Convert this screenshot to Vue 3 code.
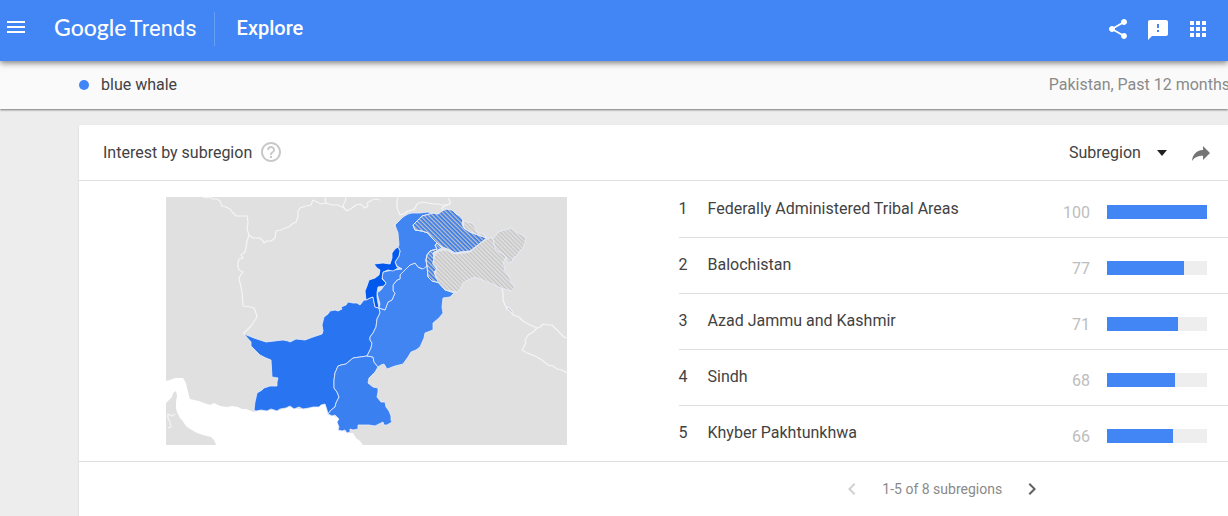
<template>
  <div class="page">
    <header class="topbar">
      <button class="icon-btn menu" aria-label="Main menu">
        <svg viewBox="0 0 24 24"><path d="M3 18h18v-2H3v2zm0-5h18v-2H3v2zm0-7v2h18V6H3z" /></svg>
      </button>
      <a class="logo" href="#"><span class="logo-name">Google</span><span class="logo-product">Trends</span></a>
      <h1 class="section-name">Explore</h1>
      <div class="actions">
        <button class="icon-btn" aria-label="Share">
          <svg viewBox="0 0 24 24"><path d="M18 16.08c-.76 0-1.44.3-1.96.77L8.91 12.7c.05-.23.09-.46.09-.7s-.04-.47-.09-.7l7.05-4.11c.54.5 1.25.81 2.04.81 1.66 0 3-1.34 3-3s-1.34-3-3-3-3 1.34-3 3c0 .24.04.47.09.7L8.04 9.81C7.5 9.31 6.79 9 6 9c-1.66 0-3 1.34-3 3s1.34 3 3 3c.79 0 1.5-.31 2.04-.81l7.12 4.16c-.05.21-.08.43-.08.65 0 1.61 1.31 2.92 2.92 2.92s2.92-1.31 2.92-2.92-1.31-2.92-2.92-2.92z" /></svg>
        </button>
        <button class="icon-btn" aria-label="Send feedback">
          <svg viewBox="0 0 24 24"><path d="M20 3H4c-1.1 0-2 .9-2 2v18l4-4h14c1.1 0 2-.9 2-2V5c0-1.1-.9-2-2-2zm-7 12h-2v-2h2v2zm0-4h-2V7h2v4z" /></svg>
        </button>
        <button class="icon-btn" aria-label="Google apps">
          <svg viewBox="0 0 24 24"><path d="M4 8h4V4H4v4zm6 12h4v-4h-4v4zm-6 0h4v-4H4v4zm0-6h4v-4H4v4zm6 0h4v-4h-4v4zm6-10v4h4V4h-4zm-6 4h4V4h-4v4zm6 6h4v-4h-4v4zm0 6h4v-4h-4v4z" /></svg>
        </button>
      </div>
    </header>

    <div class="termbar">
      <span class="dot"></span>
      <span class="term">blue whale</span>
      <span class="filters">Pakistan, Past 12 months</span>
    </div>

    <main class="card">
      <div class="card-head">
        <h2>Interest by subregion</h2>
        <button class="icon-btn help" aria-label="Help">
          <svg viewBox="0 0 24 24"><path d="M11 18h2v-2h-2v2zm1-16C6.48 2 2 6.48 2 12s4.48 10 10 10 10-4.48 10-10S17.52 2 12 2zm0 18c-4.41 0-8-3.59-8-8s3.59-8 8-8 8 3.59 8 8-3.59 8-8 8zm0-14c-2.21 0-4 1.79-4 4h2c0-1.1.9-2 2-2s2 .9 2 2c0 2-3 1.75-3 5h2c0-2.25 3-2.5 3-5 0-2.21-1.79-4-4-4z" /></svg>
        </button>
        <div class="resolution">
          <select v-model="resolution" aria-label="Resolution">
            <option>Subregion</option>
          </select>
          <svg viewBox="0 0 10 6"><path d="M0 0h10L5 6z" /></svg>
        </div>
        <button class="icon-btn forward" aria-label="Share chart">
          <svg viewBox="0 0 24 24"><path d="M14 5v4C7 9.5 3.5 14 3 20c2.5-3.8 6-5.3 11-5.300V19l7-7z" /></svg>
        </button>
      </div>

      <div class="card-body">
        <div class="map-col">
          <svg class="map" viewBox="166 197 401 248" role="img" aria-label="Map of interest by subregion">
            <defs>
              <pattern id="hatch" width="3" height="3" patternUnits="userSpaceOnUse" patternTransform="rotate(-45)">
                <rect width="1.3" height="3" fill="#c4c4c4" />
              </pattern>
            </defs>
            <rect x="166" y="197" width="401" height="248" fill="#e0e0e0" />
            <path class="sea" :d="sea" />
            <path v-for="(d, i) in borders" :key="'b' + i" class="border" :d="d" />
            <path v-for="r in regions" :key="r.name" class="region" :fill="r.color" :d="r.d" />
            <path v-for="(d, i) in disputed" :key="'d' + i" class="region" fill="url(#hatch)" :d="d" />
          </svg>
        </div>

        <table class="list">
          <tbody>
            <tr v-for="(row, i) in rows" :key="row.name">
              <td class="rank">{{ i + 1 }}</td>
              <td class="name">{{ row.name }}</td>
              <td class="value">{{ row.value }}</td>
              <td class="bar-cell">
                <div class="bar"><div class="bar-fill" :style="{ width: row.value + '%' }"></div></div>
              </td>
            </tr>
          </tbody>
        </table>
      </div>

      <div class="card-foot">
        <nav class="pager">
          <button class="icon-btn prev" aria-label="Previous" disabled>
            <svg viewBox="0 0 24 24"><path d="M15.41 7.41L14 6l-6 6 6 6 1.41-1.41L10.83 12z" /></svg>
          </button>
          <span>1-5 of 8 subregions</span>
          <button class="icon-btn next" aria-label="Next">
            <svg viewBox="0 0 24 24"><path d="M10 6L8.59 7.41 13.17 12l-4.58 4.59L10 18l6-6z" /></svg>
          </button>
        </nav>
      </div>
    </main>
  </div>
</template>

<script setup>
import { ref } from 'vue'

const resolution = ref('Subregion')

const rows = [
  { name: 'Federally Administered Tribal Areas', value: 100 },
  { name: 'Balochistan', value: 77 },
  { name: 'Azad Jammu and Kashmir', value: 71 },
  { name: 'Sindh', value: 68 },
  { name: 'Khyber Pakhtunkhwa', value: 66 },
]

// Gulf of Oman and the Arabian Sea
const sea = 'M166 381L170 380 175 378 183 378 186 383 188 392 190 399 194 400 199 401 204 403 210 405 214 403 216 404 220 406 227 407 232 406 238 407 242 409 246 409 254 412 262 410 280 410 288 407 300 409 319 405 326 404 328 413 338 418 338 427 343 431 350 433 353 433 356 438 360 441 363 445 216 445 214 440 211 437 203 435 197 433 190 429 186 426 182 420 180 418 177 412 176 408 176 402 177 396 176 391 173 393 172 397 169 400 166 403z'

const borders = [
  'M203 197L206 198 210 197 213 199 217 199 220 201 222 206 226 207 230 209 233 213 236 216 247 216 248 222 247 229 249 235 247 241 246 248 245 252 241 255 243 258 239 259 238 263 238 267 239 270 243 272 240 276 239 279 241 287 242 292 243 306 251 307 254 308 256 313 257 317 255 320 251 326 247 330 243 334',
  'M249 235L253 238 260 238 263 241 264 243 267 241 271 241 275 238 276 231 281 230 285 228 289 227 292 224 296 222 298 217 298 211 300 208 306 206 311 205 313 200 317 202 321 204 326 203 332 205 338 205 342 207 344 208 347 211 352 208 356 205 360 204 363 206 365 208 368 206 367 203 372 200 376 199 380 200',
  'M326 197L325 200 326 203M346 197L345 202 343 205 344 208',
  'M398 197L397 202 397 208 400 215 404 214 408 211 413 210 415 208 417 204 422 202 428 203 433 204 438 204 442 205 446 205 450 204 450 201 448 198',
  'M450 204L445 206 442 208 442 210M395 225L394 226',
  'M502 288L503 293 503 300 505 305 507 309 510 311 513 315 519 317 523 321 530 325 537 328 540 327 543 324 548 325 552 325 556 329 560 333 564 337 567 338',
  'M537 328L533 332 528 335 525 340 526 343 522 350 527 353 530 354 535 356 542 360 548 365 553 366 557 369 562 370 567 373',
  'M507 310L508 307 512 311 513 315M168 428L171 427 170 422 168 418 168 414 172 416 175 414',
]

const regions = [
  {
    name: 'balochistan',
    color: '#2974f0',
    d: 'M244 334L254 338 266 342 283 340 288 341 290 342 296 339 305 340 313 337 322 334 323 331 322 325 324 317 328 314 330 311 335 310 338 311 342 309 341 307 346 305 348 302 353 303 357 303 360 305 364 300 366 300 370 298 373 297 375 307 379 308 380 313 377 319 376 327 373 333 370 337 370 340 372 343 371 348 367 356 360 357 353 358 346 364 341 365 338 366 335 373 334 380 334 388 337 392 339 397 336 403 335 407 331 410 328 414 327 410 325 404 321 405 319 407 313 407 309 408 303 409 299 407 294 409 290 406 286 408 280 409 277 411 271 409 267 411 261 410 256 411 254 410 255 402 257 393 262 390 264 388 270 386 277 386 277 382 278 378 272 377 271 360 266 358 260 355 255 350 251 346 251 342z',
  },
  {
    name: 'sindh',
    color: '#3b80f0',
    d: 'M367 356L373 357 374 362 378 367 375 372 369 378 368 383 373 387 378 388 378 392 377 397 381 402 385 402 386 407 389 411 391 416 391 420 392 422 387 425 384 425 383 422 379 424 375 426 369 425 358 425 358 429 353 430 350 429 350 432 347 433 345 430 342 431 338 430 339 427 337 422 339 419 335 415 332 416 328 414 331 410 335 407 336 403 339 397 337 392 334 388 334 380 335 373 338 366 341 365 346 364 353 358 360 357z',
  },
  {
    name: 'punjab',
    color: '#4185f3',
    d: 'M379 308L385 310 388 302 392 300 395 293 393 291 393 285 397 280 400 279 400 275 405 270 410 265 415 263 418 267 422 269 425 265 428 268 428 277 432 281 438 282 445 290 454 293 450 297 443 298 442 307 443 313 439 318 433 323 433 330 425 333 424 338 420 347 416 350 411 352 408 357 403 364 395 366 387 369 384 364 381 365 378 367 374 362 373 357 367 356 371 348 372 343 370 340 370 337 373 333 376 327 377 319 380 313z',
  },
  {
    name: 'khyber-pakhtunkhwa',
    color: '#4185f3',
    d: 'M395 225L399 221 403 217 408 214 412 213 420 213 428 212 433 214 422 216 418 220 413 225 415 230 422 231 428 233 432 238 437 243 435 245 437 249 430 251 427 255 426 260 427 266 423 269 418 267 415 263 410 265 405 270 400 275 400 279 397 280 393 285 393 291 395 293 392 300 388 302 385 310 379 308 380 304 377 293 381 290 386 283 382 278 383 272 393 270 402 269 397 266 395 262 399 256 400 251 398 247 399 245 398 233z',
  },
  {
    name: 'tribal-areas',
    color: '#0059ec',
    d: 'M398 247L395 249 392 253 392 258 390 264 383 263 374 264 377 268 380 270 379 275 375 278 369 280 367 286 365 291 366 300 370 298 373 297 375 307 379 308 378 303 377 297 377 293 378 287 384 286 386 283 382 279 383 272 388 270 393 271 398 268 402 269 397 267 395 262 399 256 400 251z',
  },
  {
    name: 'gilgit-baltistan',
    color: '#3279f0',
    d: 'M413 225L418 220 422 216 433 213 438 214 442 211 446 209 452 210 456 214 460 216 463 220 462 224 464 228 470 232 478 235 487 238 478 245 470 251 461 252 455 253 450 250 442 247 437 243 432 238 428 233 422 231 415 230z',
  },
  {
    name: 'azad-kashmir',
    color: '#3279f0',
    d: 'M437 243L435 245 437 249 430 251 427 255 426 260 427 266 428 277 432 281 440 283 436 277 434 272 437 269 433 264 434 258 433 253 438 250 442 248z',
  },
]

// claimed areas, drawn hatched over whatever lies below
const disputed = [
  regions[5].d,
  regions[6].d,
  'M438 251L446 250 455 254 470 252 478 245 487 239 493 237 494 245 498 251 503 254 506 257 503 263 505 267 504 270 509 276 511 282 515 287 512 291 508 290 498 287 493 284 489 283 485 281 480 279 475 277 468 280 463 283 461 288 457 292 451 291 445 290 438 282 436 277 435 273 437 267 433 264 434 257z',
  'M493 238L497 234 498 232 504 230 512 228 516 232 520 234 526 237 525 243 523 248 519 252 517 256 513 258 512 262 508 263 506 257 503 254 496 250 494 244z',
  'M463 221L467 222 472 223 475 227 477 232 485 235 487 238 478 235 470 232 464 228z',
  'M507 309L508 307 512 311 513 315z',
]
</script>

<style>
body {
  margin: 0;
  background: #ededed;
}
</style>

<style scoped>
.page {
  font-family: Roboto, "Liberation Sans", sans-serif;
  font-size: 16px;
  line-height: 24px;
  color: #424242;
  min-height: 100vh;
  display: flex;
  flex-direction: column;
  overflow: hidden;
}
h1,
h2 {
  margin: 0;
  font-size: 16px;
  font-weight: 400;
}
.icon-btn {
  display: block;
  width: 24px;
  height: 24px;
  padding: 0;
  border: 0;
  background: none;
  color: inherit;
  cursor: pointer;
}
.icon-btn svg {
  display: block;
  width: 24px;
  height: 24px;
  fill: currentColor;
}

/* Blue header */
.topbar {
  position: relative;
  z-index: 2;
  display: flex;
  align-items: center;
  height: 57px;
  padding: 0 18px 4px 4px;
  background: #4285f4;
  color: #fff;
  box-shadow: 0 2px 6px rgba(0, 0, 0, 0.5);
}
.menu {
  margin-bottom: 4px;
}
.logo {
  display: flex;
  align-items: baseline;
  gap: 3px;
  margin-left: 26px;
  padding-right: 17px;
  padding-bottom: 2px;
  border-right: 1px solid #689df6;
  line-height: 30px;
  color: #fff;
  text-decoration: none;
}
.logo-name {
  font-family: Lato, sans-serif;
  font-size: 23px;
  font-weight: 500;
}
.logo-product {
  font-size: 22px;
}
.section-name {
  margin-left: 22px;
  padding-bottom: 2px;
  font-size: 20px;
  font-weight: 500;
}
.actions {
  display: flex;
  gap: 16px;
  margin-left: auto;
  padding-top: 1px;
}

/* Search term strip */
.termbar {
  position: relative;
  z-index: 1;
  display: flex;
  align-items: center;
  height: 48px;
  padding-left: 79px;
  background: #fafafa;
  box-shadow: 0 1px 2px rgba(0, 0, 0, 0.5);
  white-space: nowrap;
}
.dot {
  width: 10px;
  height: 10px;
  margin-right: 12px;
  border-radius: 50%;
  background: #4285f4;
}
.filters {
  margin-left: auto;
  margin-right: -2px;
  color: #8a8a8a;
}

/* Card */
.card {
  flex: 1;
  margin: 16px 0 0 79px;
  background: #fff;
  border-radius: 2px 0 0 0;
  box-shadow: 0 1px 2px rgba(0, 0, 0, 0.15);
}
.card-head {
  display: flex;
  align-items: center;
  height: 55px;
  padding: 0 15px 0 24px;
  border-bottom: 1px solid #e0e0e0;
}
.help {
  margin-left: 7px;
  margin-bottom: 2px;
  color: #c8c8c8;
}
.resolution {
  display: flex;
  align-items: center;
  margin-left: auto;
}
.resolution select {
  appearance: none;
  padding: 0 28px 0 0;
  margin-right: -12px;
  border: 0;
  background: none;
  font: inherit;
  color: inherit;
}
.resolution svg {
  width: 10px;
  height: 6px;
  fill: #212121;
  pointer-events: none;
}
.forward {
  margin-left: 22px;
  color: #757575;
}
.card-body {
  display: grid;
  grid-template-columns: 1fr 1fr;
  border-bottom: 1px solid #e0e0e0;
}
.map-col {
  display: flex;
  justify-content: center;
  align-items: flex-start;
  padding: 16px;
}
.map {
  display: block;
  width: 100%;
  max-width: 401px;
}
.sea {
  fill: #fff;
}
.border {
  fill: none;
  stroke: #f5f5f5;
  stroke-width: 1.2;
  stroke-linejoin: round;
}
.region {
  stroke: #e8eefa;
  stroke-width: 0.8;
  stroke-linejoin: round;
}

/* Ranked list */
.list {
  margin: 1px 0 0 25px;
  border-collapse: separate;
  border-spacing: 0;
  align-self: start;
}
.list td {
  box-sizing: border-box;
  height: 55px;
  padding: 0;
  border-bottom: 1px solid #e0e0e0;
}
.list tr {
  height: 56px;
}
.list tr:last-child {
  height: 55px;
}
.list tr:last-child td {
  border-bottom: 0;
}
.list .rank {
  width: 29px;
}
.list .rank,
.list .name {
  padding-bottom: 2px;
}
.list .value {
  padding-top: 6px;
  width: 60px;
  text-align: right;
  color: #bdbdbd;
}
.list .bar-cell {
  padding: 5px 21px 0 17px;
  width: 138px;
}
.bar {
  height: 14px;
  background: #eee;
}
.bar-fill {
  height: 14px;
  background: #4285f4;
}

/* Pagination */
.card-foot {
  display: grid;
  grid-template-columns: 1fr 1fr;
}
.pager {
  grid-column: 2;
  display: flex;
  align-items: center;
  justify-content: center;
  gap: 18px;
  height: 54px;
  padding-left: 3px;
  font-size: 14px;
  color: #8a8a8a;
}
.prev {
  color: #d0d0d0;
}
.next {
  color: #616161;
}
</style>
